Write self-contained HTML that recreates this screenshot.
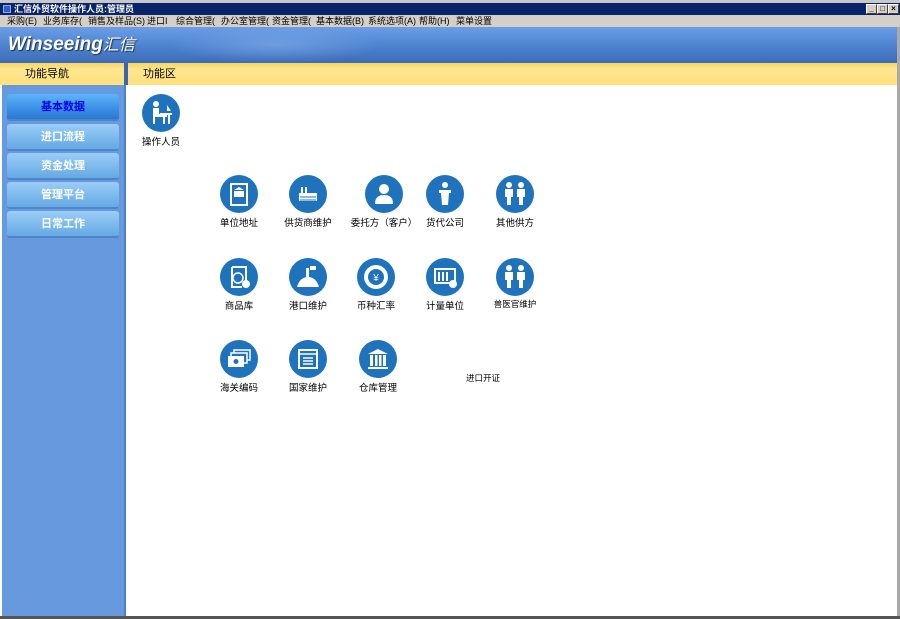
<!DOCTYPE html>
<html><head><meta charset="utf-8">
<style>
*{margin:0;padding:0;box-sizing:border-box}
body{width:900px;height:619px;position:relative;overflow:hidden;background:#fff;font-family:"Liberation Sans","Noto Sans CJK SC",sans-serif;font-size:9px;color:#000}
.abs{position:absolute}
#top{left:0;top:0;width:900px;height:3px;background:#c8c8c8}
#title{left:0;top:3px;width:900px;height:12px;background:#0a246a;color:#fff;font-weight:bold;font-size:9px;line-height:12px;padding-left:14px}
#title .ic{position:absolute;left:3px;top:2px;width:8px;height:8px;background:#3060c0;border:1px solid #8af}
.wb{position:absolute;top:4px;width:11px;height:10px;background:#d4d0c8;border:1px solid #fff;border-right-color:#404040;border-bottom-color:#404040;font-size:8px;line-height:8px;text-align:center;color:#000;font-weight:bold}
#menu{left:0;top:15px;width:900px;height:12px;background:#d4d0c8;line-height:12px;font-size:9px}
#menu span{position:absolute;top:0}
#banner{left:0;top:27px;width:900px;height:36px;background:linear-gradient(#6a9ee6,#4f84d0 50%,#3c6cb8)}
#logo{left:8px;top:31px;color:#fff;font:italic bold 19px "Liberation Sans",sans-serif;text-shadow:1px 1px 1px #234}
#logo small{font:italic 16px "Noto Sans CJK SC",sans-serif}
#map{left:170px;top:27px;width:210px;height:36px;background:radial-gradient(ellipse at 50% 50%,rgba(140,180,240,.5),rgba(140,180,240,0) 70%)}
.ybar{top:63px;height:22px;background:linear-gradient(#f7d660,#ffe690 30%,#ffe17a);font-size:11px;line-height:22px}
#side{left:2px;top:85px;width:124px;height:531px;background:#6699dd;border-right:2px solid #4a80cc}
.nb{position:absolute;left:5px;width:112px;height:27px;border-radius:3px;background:linear-gradient(#9ccdf6,#78b8ec 60%,#68a8e4);color:#fff;font-size:11px;font-weight:bold;text-align:center;line-height:26px;border-bottom:2px solid #4a86c8}
.nb.act{background:linear-gradient(#5eb4fa,#3a8ee6 60%,#2a78d0);color:#0000ee}
.it{position:absolute;width:80px;text-align:center;font-size:9.5px}
.it svg{display:block;margin:0 auto 2px}
#bottom{left:0;top:616px;width:900px;height:3px;background:#555}
#rb{left:897px;top:27px;width:3px;height:592px;background:#aaa}
</style></head><body>
<div id="top" class="abs"></div>
<div id="title" class="abs"><div class="ic"></div>汇信外贸软件操作人员:管理员
<div class="wb" style="left:866px;top:1px">_</div><div class="wb" style="left:877px;top:1px">□</div><div class="wb" style="left:888px;top:1px">×</div></div>
<div id="menu" class="abs">
<span style="left:7px">采购(E)</span><span style="left:43px">业务库存(</span><span style="left:88px">销售及样品(S)</span><span style="left:147px">进口I</span><span style="left:176px">综合管理(</span><span style="left:221px">办公室管理(</span><span style="left:272px">资金管理(</span><span style="left:316px">基本数据(B)</span><span style="left:368px">系统选项(A)</span><span style="left:419px">帮助(H)</span><span style="left:456px">菜单设置</span></div>
<div id="banner" class="abs"></div><div id="map" class="abs"></div>
<div id="logo" class="abs">Winseeing<small>汇信</small></div>
<div class="abs ybar" style="left:0;width:124px;padding-left:25px">功能导航</div>
<div class="abs" style="left:124px;top:63px;width:4px;height:22px;background:#3a64b0"></div>
<div class="abs ybar" style="left:128px;width:772px;padding-left:15px">功能区</div>
<div id="side" class="abs">
<div class="nb act" style="top:9px">基本数据</div>
<div class="nb" style="top:39px">进口流程</div>
<div class="nb" style="top:68px">资金处理</div>
<div class="nb" style="top:97px">管理平台</div>
<div class="nb" style="top:126px">日常工作</div>
</div>

<div class="it" style="left:121px;top:94px"><svg width="38" height="38" viewBox="0 0 38 38"><circle cx="19" cy="19" r="19" fill="#1f73bd"/><circle cx="14" cy="10" r="3" fill="#fff"/><path d="M11 14h6v6h8v3H13v7h-2zM18 19h12v2h-2v9h-2v-9h-3v9h-2v-9h-3zM25 11l4 6h-4z" fill="#fff"/></svg>操作人员</div>

<div class="it" style="left:199px;top:175px"><svg width="38" height="38" viewBox="0 0 38 38"><circle cx="19" cy="19" r="19" fill="#1f73bd"/><rect x="11" y="9" width="16" height="21" fill="none" stroke="#fff" stroke-width="2"/><path d="M14 15l5-3 5 3zM14 16h10v6H14z" fill="#fff"/></svg>单位地址</div>
<div class="it" style="left:268px;top:175px"><svg width="38" height="38" viewBox="0 0 38 38"><circle cx="19" cy="19" r="19" fill="#1f73bd"/><path d="M12 12h2v6h2v-6h2v6h10v8H10v-8h2z" fill="#fff"/><path d="M11 22h16M11 25h16" stroke="#1f73bd"/></svg>供货商维护</div>
<div class="it" style="left:344px;top:175px"><svg width="38" height="38" viewBox="0 0 38 38"><circle cx="19" cy="19" r="19" fill="#1f73bd"/><circle cx="19" cy="14" r="5" fill="#fff"/><path d="M10 29c0-7 4-9 9-9s9 2 9 9z" fill="#fff"/></svg>委托方（客户）</div>
<div class="it" style="left:405px;top:175px"><svg width="38" height="38" viewBox="0 0 38 38"><circle cx="19" cy="19" r="19" fill="#1f73bd"/><circle cx="19" cy="10" r="3" fill="#fff"/><path d="M13 15h12v3h-2l-1 12h-6l-1-12h-2z" fill="#fff"/></svg>货代公司</div>
<div class="it" style="left:475px;top:175px"><svg width="38" height="38" viewBox="0 0 38 38"><circle cx="19" cy="19" r="19" fill="#1f73bd"/><circle cx="13" cy="10" r="3" fill="#fff"/><circle cx="25" cy="10" r="3" fill="#fff"/><path d="M9 14h8v8h-2v8h-4v-8H9zM21 14h8v8h-2v8h-4v-8h-2z" fill="#fff"/></svg>其他供方</div>

<div class="it" style="left:199px;top:258px"><svg width="38" height="38" viewBox="0 0 38 38"><circle cx="19" cy="19" r="19" fill="#1f73bd"/><path d="M12 9h14v14M12 9v20h10" stroke="#fff" stroke-width="2" fill="none"/><circle cx="18" cy="20" r="5" stroke="#fff" stroke-width="1.5" fill="none"/><circle cx="26" cy="26" r="4" fill="#fff"/></svg>商品库</div>
<div class="it" style="left:268px;top:258px"><svg width="38" height="38" viewBox="0 0 38 38"><circle cx="19" cy="19" r="19" fill="#1f73bd"/><path d="M8 29c2-7 6-10 11-10s9 3 11 10z" fill="#fff"/><rect x="17" y="10" width="3" height="9" fill="#fff"/><path d="M21 8h6v4h-6z" fill="#fff"/></svg>港口维护</div>
<div class="it" style="left:336px;top:258px"><svg width="38" height="38" viewBox="0 0 38 38"><circle cx="19" cy="19" r="19" fill="#1f73bd"/><circle cx="19" cy="19" r="12" fill="#fff"/><circle cx="19" cy="19" r="8" fill="#1f73bd"/><text x="19" y="23" font-size="10" fill="#fff" text-anchor="middle">¥</text></svg>币种汇率</div>
<div class="it" style="left:405px;top:258px"><svg width="38" height="38" viewBox="0 0 38 38"><circle cx="19" cy="19" r="19" fill="#1f73bd"/><rect x="9" y="11" width="20" height="14" fill="none" stroke="#fff" stroke-width="2"/><path d="M13 14v9M17 14v9M21 14v9" stroke="#fff" stroke-width="2"/><circle cx="27" cy="26" r="4" fill="#fff"/></svg>计量单位</div>
<div class="it" style="left:475px;top:258px;font-size:8.5px"><svg width="38" height="38" viewBox="0 0 38 38"><circle cx="19" cy="19" r="19" fill="#1f73bd"/><circle cx="13" cy="10" r="3" fill="#fff"/><circle cx="25" cy="10" r="3" fill="#fff"/><path d="M9 14h8v8h-2v8h-4v-8H9zM21 14h8v8h-2v8h-4v-8h-2z" fill="#fff"/></svg>兽医官维护</div>

<div class="it" style="left:199px;top:340px"><svg width="38" height="38" viewBox="0 0 38 38"><circle cx="19" cy="19" r="19" fill="#1f73bd"/><rect x="14" y="10" width="16" height="10" fill="none" stroke="#fff" stroke-width="1.5"/><rect x="11" y="13" width="16" height="10" fill="#1f73bd" stroke="#fff" stroke-width="1.5"/><rect x="8" y="16" width="16" height="11" fill="#fff"/><circle cx="16" cy="21.5" r="2.5" fill="#1f73bd"/></svg>海关编码</div>
<div class="it" style="left:268px;top:340px"><svg width="38" height="38" viewBox="0 0 38 38"><circle cx="19" cy="19" r="19" fill="#1f73bd"/><rect x="10" y="10" width="18" height="18" fill="none" stroke="#fff" stroke-width="2"/><path d="M10 14h18M14 18h10M14 21h10M14 24h10" stroke="#fff" stroke-width="1.5"/></svg>国家维护</div>
<div class="it" style="left:338px;top:340px"><svg width="38" height="38" viewBox="0 0 38 38"><circle cx="19" cy="19" r="19" fill="#1f73bd"/><path d="M9 14l10-5 10 5zM9 27h20v2H9zM11 15h3v11h-3zM16 15h2.5v11H16zM20 15h2.5v11H20zM24 15h3v11h-3z" fill="#fff"/></svg>仓库管理</div>
<div class="abs" style="left:466px;top:372px;font-size:8.5px">进口开证</div>

<div id="rb" class="abs"></div>
<div id="bottom" class="abs"></div>
</body></html>
